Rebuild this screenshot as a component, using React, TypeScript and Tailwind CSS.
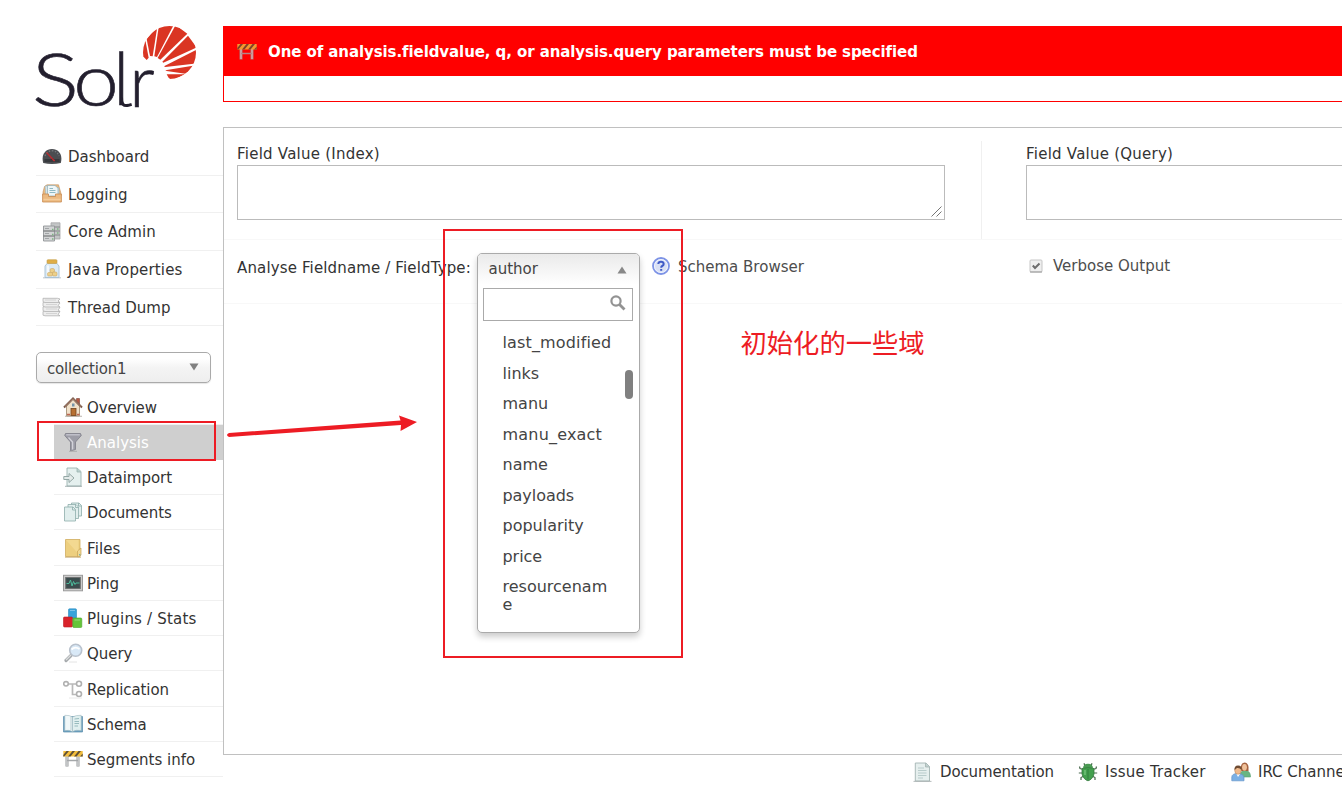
import type { ReactNode } from "react";

function Icon({ children }: { children: ReactNode }) {
  return (
    <svg viewBox="0 0 20 20" className="h-5 w-5 shrink-0">
      {children}
    </svg>
  );
}

const DashboardIcon = () => (
  <Icon>
    <path d="M1.200 17C-1 9 3 3 10 3S21 9 18.800 17Q10 18.800 1.200 17Z" fill="#4b4d51" />
    <path d="M3 10Q5 4.800 10 4.800T17 10" fill="none" stroke="#76797d" strokeWidth="1.400" strokeDasharray="1.500 1.500" />
    <path d="M2.500 13H17.500V16H2.500Z" fill="#37393d" />
    <path d="M4.500 6.500L12.500 15" stroke="#b92c30" strokeWidth="1.400" />
    <path d="M8.500 13.500Q10 10.500 12 13.500Z" fill="#2a2b2e" />
    <path d="M9 11.500L12.500 15" stroke="#b92c30" strokeWidth="1.100" />
  </Icon>
);

const LoggingIcon = () => (
  <Icon>
    <path d="M2.500 2.500L5 .8H16.500L19 9.500V12H1V8Z" fill="#e9bb83" stroke="#c28e5b" strokeWidth=".6" />
    <path d="M3 2H6.500L17 4V13H4Z" fill="#d6e5ea" stroke="#9fb6be" strokeWidth=".6" />
    <path d="M5.500 1.500H13L16 4V12H5.500Z" fill="#eef6f8" stroke="#8fadb6" strokeWidth=".7" />
    <path d="M7.500 4.500H11M7.500 6.500H13.500M7.500 8.500H13.500" stroke="#8ebac5" strokeWidth="1" />
    <path d="M.6 10H6.500V12.500H13.500V10H19.400V18H.6Z" fill="#ecb980" stroke="#c88a50" strokeWidth=".8" />
    <path d="M1.500 15.500H18.500" stroke="#f4cc9b" strokeWidth="1.500" />
  </Icon>
);

const CoreIcon = () => (
  <Icon>
    <path d="M9 .8H18V17H9Z" fill="#c3c5c6" stroke="#a4a6a7" strokeWidth=".8" />
    <path d="M10 5H18M10 9H18M10 13H18" stroke="#858889" />
    <path d="M1.500 4H12.500V19H1.500Z" fill="#d2d4d5" stroke="#929597" strokeWidth=".9" />
    <path d="M1.500 9H12.500M1.500 14H12.500" stroke="#66696b" strokeWidth="1.200" />
    <path d="M3 6.500H7M3 11.500H7M3 16.500H7" stroke="#a2a5a7" />
    <path d="M10 7.500H11.500M10 12.500H11.500M10 17H11.500M15 7H16.500M15 11H16.500" stroke="#7db682" strokeWidth="1.300" />
  </Icon>
);

const JavaIcon = () => (
  <Icon>
    <path d="M1 18.800H19" stroke="#c9cdd1" strokeWidth="1.200" />
    <path d="M5.500 4H14.500L17 7V18.500H3V7Z" fill="#dcebf6" stroke="#a6bfd2" strokeWidth=".9" />
    <rect x="5" y=".7" width="10" height="3.800" rx="1" fill="#dfae47" stroke="#c49d46" strokeWidth=".6" />
    <path d="M6 6.500V16" stroke="#fff" strokeWidth="1.400" />
    <g fill="#ecd08a" stroke="#c79f59" strokeWidth=".5">
      <rect x="8" y="9.500" width="4.500" height="4" rx="1.500" />
      <rect x="5.500" y="13.500" width="5" height="3.500" rx="1.200" />
      <rect x="10.500" y="13" width="4.500" height="4" rx="1.200" />
    </g>
  </Icon>
);

const ThreadIcon = () => (
  <Icon>
    <g fill="#ededed" stroke="#b2b2b2" strokeWidth=".8">
      <path d="M1 14.500L3 13.500H15L18 14.500L16 17.500L18 18.800H3L1 18.200Z" />
      <path d="M1 10L3 9H16L18 10.500L16 13L18 14.500H3L1 13.700Z" />
      <path d="M1 5.500L3 4.500H16L18 6L16 8.500L18 10H3L1 9.200Z" />
      <path d="M1 1.300H15.500L18 2L16 4L18 5.500H3L1 4.700Z" />
    </g>
    <path d="M3 3H14M4 7.500H15M4 12H15M4 16.500H15" stroke="#d4d4d4" strokeWidth="1.200" />
  </Icon>
);

const HouseIcon = () => (
  <Icon>
    <path d="M2 19.300H19" stroke="#c5c0ba" strokeWidth="1.200" />
    <path d="M13.500 1.500H16.500V8H13.500Z" fill="#b85742" stroke="#764033" strokeWidth=".6" />
    <path d="M3.500 9L10 2L16.500 9V18.800H3.500Z" fill="#f1e2cb" stroke="#9c8568" strokeWidth=".8" />
    <path d="M1 10.500L10 1.500L19 10.500" fill="none" stroke="#7b5c4d" strokeWidth="2" />
    <path d="M2 9.500L10 1.800L18 9.500" fill="none" stroke="#b88b76" strokeWidth=".8" />
    <rect x="8" y="11.500" width="5" height="7" fill="#b77032" stroke="#73451f" strokeWidth=".8" />
    <rect x="9" y="6.500" width="2.500" height="3" fill="#7494a9" />
    <path d="M4 17.500H7M14 17.500H16.500" stroke="#bf6652" strokeWidth="1.500" />
  </Icon>
);

const FunnelIcon = () => (
  <Icon>
    <path d="M2.500 1.500H17.500L18.300 3.500L12.500 10V17.500L7.500 19V10L1.700 3.500Z" fill="#9c9ca6" stroke="#7d7d88" strokeWidth=".8" />
    <path d="M3.200 2.800H16.800" stroke="#c9c9d2" strokeWidth="1.200" />
    <path d="M5.500 5.500L9.600 10V17.500" fill="none" stroke="#d3d3da" strokeWidth="1.300" />
    <path d="M6 19.300H14" stroke="#adadad" />
  </Icon>
);

const ImportIcon = () => (
  <Icon>
    <path d="M4 1H14L18 4.500V19H4Z" fill="#e5f0ef" stroke="#9bb2b0" strokeWidth=".9" />
    <path d="M14 1V5H18" fill="#b9d0ce" stroke="#9bb2b0" strokeWidth=".8" />
    <path d="M.8 9.500H6V6.500L11 11L6 15.500V12.500H.8Z" fill="#e4ebea" stroke="#95a8a6" strokeWidth="1" />
    <path d="M2 19.300H19" stroke="#9eabab" strokeWidth=".9" />
  </Icon>
);

const DocumentsIcon = () => (
  <Icon>
    <g fill="#e1eeed" stroke="#8eadab" strokeWidth=".8">
      <path d="M8.500 1H16L18.500 3.500V14H8.500Z" />
      <path d="M5 2.500H13L15.500 5V16.500H5Z" />
      <path d="M1.500 5H10L12.500 7.500V19H1.500Z" />
      <path d="M9.500 5V8H12.500M12.500 2.500V5.500H15.500M15.500 1V4H18.500" fill="none" />
    </g>
  </Icon>
);

const FilesIcon = () => (
  <Icon>
    <path d="M2.500 1.500H17V18.500H2.500Z" fill="#edcf7f" stroke="#d0ad60" strokeWidth=".8" />
    <path d="M3 2H15.500V16Z" fill="#f5dd99" fillOpacity=".7" />
    <path d="M14.500 18.800V13L18 10V17L16.500 18.800Z" fill="#f0d894" stroke="#c9a453" strokeWidth=".7" />
    <path d="M16.800 16V17.500" stroke="#50a4b4" />
    <path d="M2 19.200H18" stroke="#c3a365" strokeWidth=".8" />
  </Icon>
);

const PingIcon = () => (
  <Icon>
    <rect x=".5" y="2.300" width="19" height="15.500" fill="#cbcbcb" stroke="#9b9b9b" />
    <rect x="2.700" y="4.500" width="14.600" height="11" fill="#3b4c4d" stroke="#6e7070" />
    <path d="M3.500 10.500H6L7.500 7L9 13L10.500 8.500L12 11.500L13 10H16.500" fill="none" stroke="#4dba9b" />
  </Icon>
);

const PluginsIcon = () => (
  <Icon>
    <rect x="5.500" y=".8" width="8" height="9.500" rx="1" fill="#39a3da" stroke="#2c8cc0" strokeWidth=".6" />
    <rect x=".5" y="9" width="9" height="10" rx="1" fill="#d9232b" stroke="#bd1d25" strokeWidth=".6" />
    <rect x="9.800" y="10" width="9" height="9.500" rx="1" fill="#65c439" stroke="#4aa52b" strokeWidth=".6" />
    <path d="M7 2.500H12M11.500 12H17" stroke="#fff" strokeOpacity=".35" />
  </Icon>
);

const QueryIcon = () => (
  <Icon>
    <path d="M8 12.500L3 17.500" stroke="#a6aaad" strokeWidth="3.200" strokeLinecap="round" />
    <path d="M8 12L3 17" stroke="#dcdddd" strokeWidth="1.200" />
    <circle cx="12.700" cy="7.200" r="6" fill="#d9e9f7" stroke="#b9c2cd" strokeWidth="1.600" />
    <path d="M8.500 6.500Q12 3 16.500 6" fill="none" stroke="#fff" strokeWidth="1.800" />
    <path d="M6 19H14" stroke="#e4e4e4" />
  </Icon>
);

const ReplicationIcon = () => (
  <Icon>
    <path d="M5.500 5H14M9.500 5V15.500H14" fill="none" stroke="#b9b9b9" strokeWidth="1.700" />
    <g fill="#fff" stroke="#b0b0b0" strokeWidth="1.600">
      <ellipse cx="3" cy="4.800" rx="2.300" ry="2.200" />
      <circle cx="16" cy="4.800" r="2.500" />
      <circle cx="16" cy="15" r="2.500" />
    </g>
    <path d="M6 19H19" stroke="#e8e8e8" />
  </Icon>
);

const SchemaIcon = () => (
  <Icon>
    <path d="M.5 2.500H19.500V18H.5Z" fill="#6fa3c4" stroke="#5a8caa" strokeWidth=".7" />
    <path d="M1.800 1.300Q6.500 1 9.500 3V17.500Q6 15.800 1.800 16.500Z" fill="#f1f8f9" stroke="#9fb9bf" strokeWidth=".6" />
    <path d="M9.500 3Q13 1 18.200 1.300V16.500Q13 15.500 9.500 17.500Z" fill="#e0efef" stroke="#9fb9bf" strokeWidth=".6" />
    <path d="M11.500 5L16 4.500M11.500 7.500H16M11.500 9.500H16M11.500 12H15" stroke="#8fb4b8" strokeWidth=".9" />
    <path d="M8 3V16" stroke="#bcd0d2" />
  </Icon>
);

const BarrierIcon = () => (
  <Icon>
    <path d="M4 6V17.500M15 6V17.500" stroke="#96999c" strokeWidth="3" />
    <path d="M4 7V17M15 7V17" stroke="#e0e1e2" strokeWidth="1.200" />
    <path d="M4 11.500H15" stroke="#a4a7a9" strokeWidth="1.500" />
    <path d="M.3 2H19.700V7.500H.3Z" fill="#f2bd3c" />
    <path d="M.3 6L3.500 2H6L1.300 7.500H.3ZM5 7.500L9.500 2H12L7.500 7.500ZM11 7.500L15.500 2H18L13.500 7.500ZM17 7.500L19.700 4.500V7.500Z" fill="#5e5038" />
  </Icon>
);

const DocIcon = () => (
  <Icon>
    <path d="M2.300 1H13L16.500 4.500V19H2.300Z" fill="#e6efee" stroke="#a4b4b3" strokeWidth=".9" />
    <path d="M12.500 1V5H16.500" fill="#bfd0ce" stroke="#a4b4b3" strokeWidth=".8" />
    <path d="M5 6H11M5 8.500H13.500M5 11H13.500M5 13.500H13.500M5 16H10" stroke="#b3c7c6" strokeWidth=".9" />
    <path d="M.5 19.400H18.500" stroke="#a3acac" strokeWidth=".8" />
  </Icon>
);

const BugIcon = () => (
  <Icon>
    <g fill="none" stroke="#4b6b50" strokeWidth="1.200">
      <path d="M7 4L6 1.300M13 4L14 1.300M5.500 7.500L2 6.500L1.500 4.500M14.500 7.500L18 6.500L18.500 4.500M5 11H.8M15 11H19.200M6 14L3 15.500V18M14 14L17 15.500V18" />
    </g>
    <path d="M5 6.500Q5 1.800 10 1.800T15 6.500Z" fill="#4a9a53" />
    <path d="M4 6.500Q10 4.800 16 6.500V12Q14.500 17.500 10 18.800Q5.500 17.500 4 12Z" fill="#43a04e" stroke="#347a3e" strokeWidth=".8" />
    <path d="M10 7V17.500" stroke="#2f7639" strokeWidth=".8" />
    <path d="M7 8V13" stroke="#79c67f" strokeWidth="1.300" />
  </Icon>
);

const UsersIcon = () => (
  <Icon>
    <path d="M9 14Q9 8.500 14 8.500T19.500 14V15H9Z" fill="#69b582" stroke="#5aa173" strokeWidth=".6" />
    <path d="M9.800 9Q9 .5 13.800 .5Q18.500 1 17.500 9Z" fill="#a5623f" />
    <ellipse cx="13.500" cy="5.300" rx="2.400" ry="3.400" fill="#f0c19a" />
    <path d="M.8 18.800V15Q1 11.500 6.500 11.500T13 15V18.800Z" fill="#7bb0e4" stroke="#6394c8" strokeWidth=".7" />
    <path d="M5.500 12L7 15L9 12Z" fill="#fff" />
    <ellipse cx="7" cy="8.300" rx="3.300" ry="4" fill="#efb98b" stroke="#b07c50" strokeWidth=".5" />
    <path d="M3.500 8Q3.200 3.200 7.200 3.400T10.700 8Q8.500 5.500 6 6Z" fill="#6e4b32" />
  </Icon>
);

const HelpIcon = () => (
  <svg viewBox="0 0 18 18" className="h-[18px] w-[18px] shrink-0">
    <circle cx="9" cy="9" r="8" fill="#d9e0f4" stroke="#7d93e6" strokeWidth="1.800" />
    <circle cx="9" cy="9" r="6.500" fill="none" stroke="#f3f6ff" strokeWidth=".9" />
    <path d="M6.300 7Q6.500 4.700 9 4.700T11.700 7Q11.700 8.300 10.200 9Q9.200 9.500 9.200 10.700" fill="none" stroke="#3f5ac6" strokeWidth="2" />
    <path d="M8.200 12H10.200V13.800H8.200Z" fill="#3f5ac6" />
  </svg>
);

const Logo = () => (
  <svg viewBox="0 0 630 330" className="h-[110px] w-[210px] shrink-0">
    <defs>
      <clipPath id="sun">
        <circle cx="448.500" cy="127.500" r="79.500" />
      </clipPath>
    </defs>
    <g fill="#231f2e" stroke="#231f2e" strokeWidth="1.800" fontFamily="Lato" fontWeight="300" fontSize="216">
      <text x="36" y="289" textLength="141" lengthAdjust="spacingAndGlyphs">S</text>
      <text x="160" y="289" textLength="137" lengthAdjust="spacingAndGlyphs">o</text>
      <text x="280" y="285">l</text>
      <text x="328" y="290">r</text>
    </g>
    <path d="M304.500 262Q303 291 325 286L335 283" fill="none" stroke="#231f2e" strokeWidth="9" />
    <g clipPath="url(#sun)" fill="#da3523">
      <path d="M386 143L376 90L360 110V130L380 150Z" />
      <path d="M390 138L380 87L412 50L398 139Z" />
      <path d="M403 139L417 45H461L411 141Z" />
      <path d="M413 144L467 45L502 71L421 149Z" />
      <path d="M427 155L504 77L530 112L430 158Z" />
      <path d="M432 169L530 119V160L436 171Z" />
      <path d="M436 181L532 165L496 191L440 183Z" />
      <path d="M440 193L495 193L455 212L445 202Z" />
    </g>
  </svg>
);

const mainMenu = [
  { label: "Dashboard", icon: <DashboardIcon />, tracking: "tracking-normal" },
  { label: "Logging", icon: <LoggingIcon />, tracking: "tracking-normal" },
  { label: "Core Admin", icon: <CoreIcon />, tracking: "tracking-[0.05px]" },
  { label: "Java Properties", icon: <JavaIcon />, tracking: "tracking-[0.15px]" },
  { label: "Thread Dump", icon: <ThreadIcon />, tracking: "tracking-normal" },
];

const coreMenu = [
  { label: "Overview", icon: <HouseIcon />, tracking: "tracking-[-0.1px]" },
  { label: "Analysis", icon: <FunnelIcon />, tracking: "tracking-normal", active: true },
  { label: "Dataimport", icon: <ImportIcon />, tracking: "tracking-[-0.03px]" },
  { label: "Documents", icon: <DocumentsIcon />, tracking: "tracking-[-0.1px]" },
  { label: "Files", icon: <FilesIcon />, tracking: "tracking-[0.1px]" },
  { label: "Ping", icon: <PingIcon />, tracking: "tracking-normal" },
  { label: "Plugins / Stats", icon: <PluginsIcon />, tracking: "tracking-[0.2px]" },
  { label: "Query", icon: <QueryIcon />, tracking: "tracking-[-0.05px]" },
  { label: "Replication", icon: <ReplicationIcon />, tracking: "tracking-[-0.1px]" },
  { label: "Schema", icon: <SchemaIcon />, tracking: "tracking-[-0.1px]" },
  { label: "Segments info", icon: <BarrierIcon />, tracking: "tracking-normal" },
];

const fields = [
  { name: "last_modified", tracking: "tracking-[0.15px]" },
  { name: "links", tracking: "tracking-normal" },
  { name: "manu", tracking: "tracking-normal" },
  { name: "manu_exact", tracking: "tracking-[0.2px]" },
  { name: "name", tracking: "tracking-normal" },
  { name: "payloads", tracking: "tracking-[-0.05px]" },
  { name: "popularity", tracking: "tracking-normal" },
  { name: "price", tracking: "tracking-[-0.05px]" },
  { name: "resourcename", tracking: "tracking-normal" },
];

function Sidebar() {
  return (
    <aside className="flex w-[223px] shrink-0 flex-col pt-[10px]">
      <div className="flex h-[128px] pl-5">
        <Logo />
      </div>
      <nav className="ml-9">
        {mainMenu.map((m) => (
          <a key={m.label} className="flex h-[37.7px] items-center gap-[6px] border-b border-[#f0f0f0] pl-[6px]">
            {m.icon}
            <span className={`pt-[1.5px] ${m.tracking}`}>{m.label}</span>
          </a>
        ))}
      </nav>
      <div className="mt-[25.5px] ml-9 flex h-[31px] w-[175px] items-center justify-between rounded-[5px] border border-[#aaa] bg-linear-to-b from-white from-20% via-[#f4f4f4] via-50% to-[#eeeeee] pr-[11px] pl-[10px] text-[#444] shadow-[0_1px_1px_rgba(0,0,0,0.1)]">
        <span className="pt-[3px] tracking-[-0.2px]">collection1</span>
        <svg viewBox="0 0 10 8" className="h-2 w-[10px]">
          <path d="M.5 .5H9.500L5 7.500Z" fill="#808080" />
        </svg>
      </div>
      <nav className="mt-[6.500px] ml-[54px]">
        {coreMenu.map((m) => (
          <a
            key={m.label}
            className={
              m.active
                ? "flex h-[35.25px] items-center gap-1 border-b border-[#cfcfcf] bg-[#cfcfcf] pl-[9px] text-white"
                : "flex h-[35.25px] items-center gap-1 border-b border-[#f0f0f0] pl-[9px]"
            }
          >
            {m.icon}
            <span className={`pt-[2px] ${m.tracking}`}>{m.label}</span>
          </a>
        ))}
      </nav>
    </aside>
  );
}

function FieldSelect() {
  return (
    <div className="absolute top-0 left-0 flex h-[380px] w-[163px] flex-col rounded-[5px] border border-[#aaa] bg-white text-base text-[#444] shadow-[0_4px_6px_rgba(0,0,0,0.2)]">
      <div className="flex h-[34px] shrink-0 items-center justify-between rounded-t-[4px] bg-linear-to-b from-[#eaeaea] to-white to-90% pr-[12px] pb-[3px] pl-[10.5px] text-[15px]">
        <span>author</span>
        <svg viewBox="0 0 10 8" className="h-2 w-[10px]">
          <path d="M.5 7.500H9.500L5 .5Z" fill="#888" />
        </svg>
      </div>
      <div className="mr-[6px] ml-[5px] flex h-[33px] shrink-0 justify-end border border-[#aaa] pt-[6px] pr-[6px]">
        <svg viewBox="0 0 16 16" className="h-4 w-4">
          <circle cx="6" cy="6" r="4.600" fill="none" stroke="#939393" strokeWidth="2.200" />
          <path d="M9.500 9.500L14.500 14.500" stroke="#939393" strokeWidth="2.800" />
        </svg>
      </div>
      <div className="flex">
        <ul className="w-[147px] pt-[13px] pl-[24.5px]">
          {fields.map((f) => (
            <li key={f.name} className={`mb-[12.500px] w-[112px] leading-[18px] break-all ${f.tracking}`}>
              {f.name}
            </li>
          ))}
        </ul>
        <div className="mt-[49px] h-[29px] w-2 rounded-full bg-[#808080]" />
      </div>
    </div>
  );
}

function FieldArea({ label }: { label: string }) {
  return (
    <div>
      <div className="h-[24px] pt-px leading-[24px] tracking-[0.24px]">{label}</div>
      <div className="flex h-[55px] w-[708px] items-end justify-end border border-[#bbb] p-[2px]">
        <svg viewBox="0 0 11 11" className="h-[11px] w-[11px]">
          <path d="M.5 10.500L10.500 .5M5.500 10.500L10.500 5.500" stroke="#666" strokeWidth=".9" />
        </svg>
      </div>
    </div>
  );
}

export default function App() {
  return (
    <div className="relative flex h-[798px] w-full overflow-hidden bg-white font-['Verdana','DejaVu_Sans',sans-serif] text-[15px] leading-5 text-[#333]">
      <Sidebar />
      <main className="flex min-w-0 flex-1 flex-col overflow-hidden pt-[26px]">
        <div className="h-[76px] w-[1400px] shrink-0 border border-[#ff0000]">
          <div className="flex h-[49px] items-center gap-[11px] bg-[#ff0000] pl-[13px] font-bold text-white">
            <div className="flex opacity-80">
              <BarrierIcon />
            </div>
            <span className="tracking-[-0.085px] whitespace-nowrap">
              One of analysis.fieldvalue, q, or analysis.query parameters must be specified
            </span>
          </div>
        </div>
        <section className="mt-[25px] h-[628px] w-[1700px] shrink-0 border border-[#c0c0c0] pt-[13px]">
          <div className="flex h-[99px] border-b border-[#f8f8f8]">
            <div className="w-[758px] shrink-0 border-r border-[#f0f0f0] pl-[13px]">
              <FieldArea label="Field Value (Index)" />
            </div>
            <div className="pl-[44px]">
              <FieldArea label="Field Value (Query)" />
            </div>
          </div>
          <div className="flex h-[64px] border-b border-[#f8f8f8] pt-[13px] pl-[13px]">
            <span className="w-[240px] pt-[5px] tracking-[0.14px] whitespace-nowrap">Analyse Fieldname / FieldType:</span>
            <div className="relative w-[163px]">
              <FieldSelect />
            </div>
            <div className="flex h-[26px] w-[389px] items-center gap-[8px] pl-[12px] text-[#4d4d4d]">
              <HelpIcon />
              <span className="pt-px">Schema Browser</span>
            </div>
            <div className="flex h-[25px] items-center gap-[10px] text-[#4d4d4d]">
              <svg viewBox="0 0 14 14" className="h-[14px] w-[14px]">
                <rect x="1" y="1" width="12" height="12" rx="1" fill="#eee" stroke="#c6c6c6" />
                <path d="M1 13H13" stroke="#999" />
                <path d="M3.800 6.500L6 9L10.500 4.500" fill="none" stroke="#6c6c6c" strokeWidth="2" />
              </svg>
              <span>Verbose Output</span>
            </div>
          </div>
        </section>
        <footer className="flex h-[33px] shrink-0 items-center pl-[690px] whitespace-nowrap">
          <span className="flex w-[165px] shrink-0 items-center gap-[7px] tracking-[-0.13px]"><DocIcon />Documentation</span>
          <span className="flex w-[153px] shrink-0 items-center gap-[7px] tracking-[0.22px]"><BugIcon />Issue Tracker</span>
          <span className="flex shrink-0 items-center gap-[7px]"><UsersIcon />IRC Channel</span>
        </footer>
      </main>

      <div className="absolute top-[421px] left-[37px] h-[40px] w-[179px] border-2 border-[#ed1c24]" />
      <div className="absolute top-[229px] left-[443px] h-[429px] w-[240px] border-2 border-[#ed1c24]" />
      <svg viewBox="0 0 200 30" className="absolute top-[410px] left-[222px] h-[30px] w-[200px]">
        <path d="M7 23L178.500 10.500L177 5.500L195 12L178.500 21L179 15L7 27Q3 25 7 23Z" fill="#ed1c24" />
      </svg>
      <div className="absolute top-[323px] left-[740.5px] font-['Noto_Sans_CJK_SC',sans-serif] text-[26.3px] leading-[38px] whitespace-nowrap text-[#ed1c24]">
        初始化的一些域
      </div>
    </div>
  );
}
